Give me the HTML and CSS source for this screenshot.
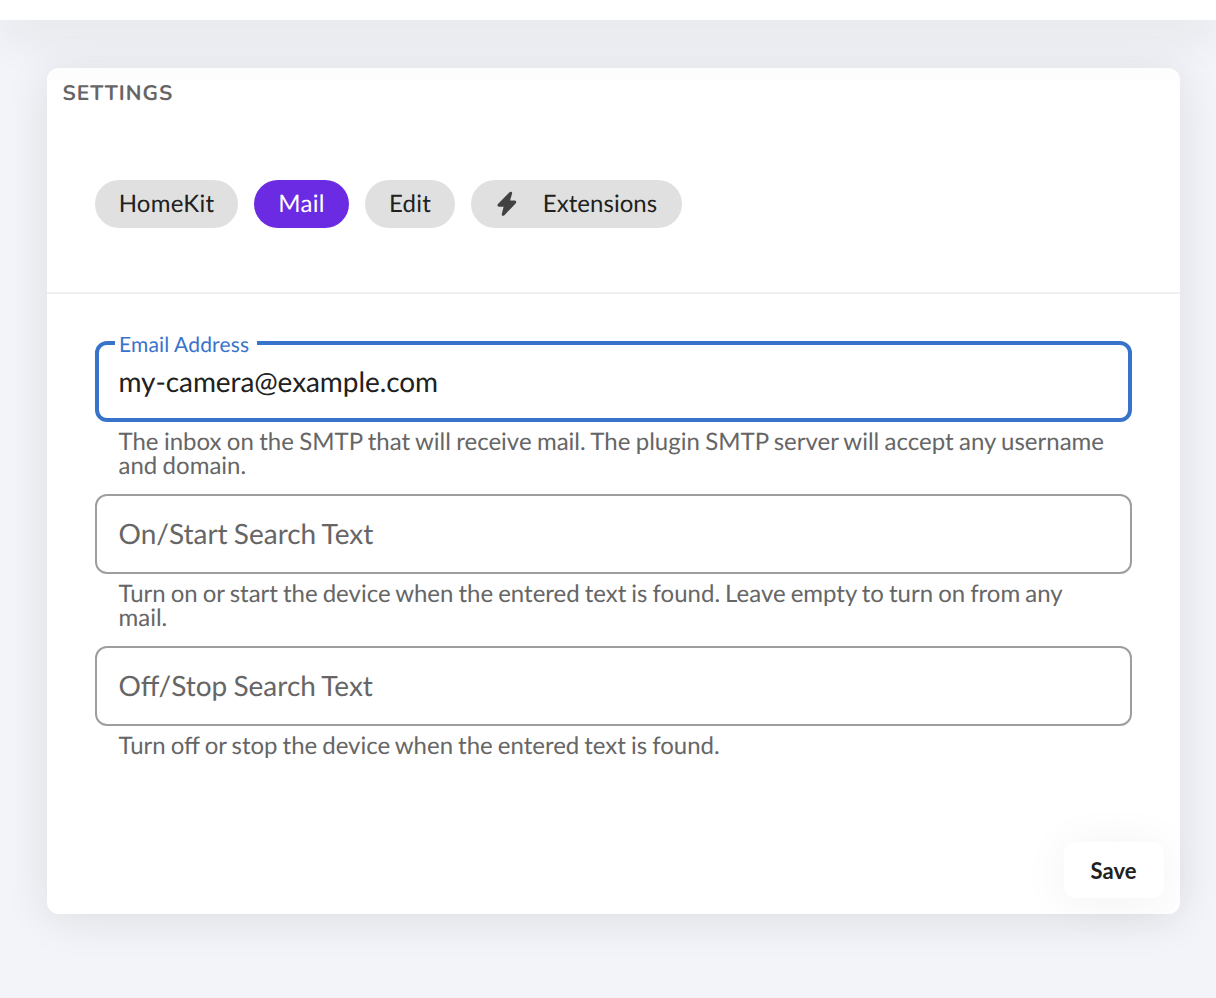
FILE: index.html
```html
<!DOCTYPE html>
<html lang="en">
<head>
<meta charset="utf-8">
<title>Settings</title>
<link rel="stylesheet" href="styles.css">
</head>
<body>
<header class="topbar"></header>
<main class="card">
  <h2 class="title">SETTINGS</h2>
  <nav class="chips">
    <span class="chip chip-homekit">HomeKit</span>
    <span class="chip chip-mail active">Mail</span>
    <span class="chip chip-edit">Edit</span>
    <span class="chip chip-ext"><svg class="bolt" width="22" height="26" viewBox="0 0 22 26"><path d="M13.5 1.3C14.8.2 16.5.9 16.1 2.6L14.1 9.6H18.6C20.4 9.7 20.8 11.3 19.6 12.4L8.4 24.2C7.1 25.4 5.3 24.6 5.8 22.9L7.6 15.8H3.1C1.3 15.7.9 14 2.2 12.8Z" fill="#424242"/></svg><span>Extensions</span></span>
  </nav>
  <section class="fields">
    <div class="field">
      <fieldset class="box focused"><legend>Email Address</legend><span class="value">my-camera@example.com</span></fieldset>
      <p class="hint hint-email">The inbox on the SMTP that will receive mail. The plugin SMTP server will accept any username<br>and domain.</p>
    </div>
    <div class="field">
      <div class="box"><span class="placeholder">On/Start Search Text</span></div>
      <p class="hint">Turn on or start the device when the entered text is found. Leave empty to turn on from any<br>mail.</p>
    </div>
    <div class="field">
      <div class="box"><span class="placeholder">Off/Stop Search Text</span></div>
      <p class="hint">Turn off or stop the device when the entered text is found.</p>
    </div>
  </section>
  <footer class="actions"><button class="save">Save</button></footer>
</main>
</body>
</html>
```
FILE: styles.css
```css
* { box-sizing: border-box; }
body { margin: 0; height: 998px; overflow: hidden; background: #f3f4f9; font-family: Lato, sans-serif; color: #212121; text-rendering: geometricPrecision; }
.topbar { height: 20px; background: #fff; box-shadow: 0 8px 48px rgba(30,30,10,.13); }
.card { display: flex; flex-direction: column; width: 1133px; height: 846px; margin: 48px 0 0 47px; background: linear-gradient(#fdfdfd 12px, #fff 13px); border-radius: 12px; box-shadow: 0 4px 44px rgba(30,30,10,.1); }
.title { margin: 0; padding: 12px 15.5px 0; height: 112px; font: 700 21px/28px Nunito, Lato, sans-serif; letter-spacing: 1.05px; color: #666; }
.chips { display: flex; gap: 16px; height: 114px; padding: 0 48px; border-bottom: 2px solid #eeeff0; }
.chip { display: flex; align-items: center; justify-content: center; height: 48px; padding-bottom: 1px; border-radius: 24px; background: #e0e0e0; font-size: 24px; line-height: 28px; letter-spacing: .25px; }
.chip-homekit { width: 143px; }
.chip-mail { width: 95px; }
.chip-edit { width: 90px; }
.chip-ext { width: 211px; gap: 25px; letter-spacing: .05px; }
.active { background: #6a2be2; color: #fff; }
.fields { padding: 48px 48px 0; }
.field { display: flex; flex-direction: column; height: 152px; }
.box { display: flex; flex-shrink: 0; align-items: center; height: 80px; margin: 0; padding: 0 21.5px 2px; border: 2px solid #9e9e9e; border-radius: 12px; font-size: 28px; }
.placeholder { color: #666; word-spacing: -1px; }
.focused { display: block; height: 92px; margin-top: -12px; padding: 0 19.5px; border: 4px solid #3873cb; }
.focused legend { margin-left: -3.5px; padding: 4px 8px 0 4px; font-size: 21px; line-height: 22px; letter-spacing: .15px; color: #3873cb; }
.value { display: block; line-height: 34px; margin-top: 8px; letter-spacing: -.08px; }
.hint { margin: 8px 23.5px 0; font-size: 24px; line-height: 24px; word-spacing: -1.1px; color: #666; white-space: nowrap; }
.hint-email { word-spacing: -.8px; }
.actions { display: flex; justify-content: flex-end; margin-top: auto; padding: 0 16px 16px; }
.save { width: 100px; height: 56px; padding: 1px 1px 0 0; border: 0; border-radius: 12px; background: #fff; box-shadow: 0 4px 48px rgba(0,0,0,.06); font: 700 22px Lato, sans-serif; color: #212121; }
```
